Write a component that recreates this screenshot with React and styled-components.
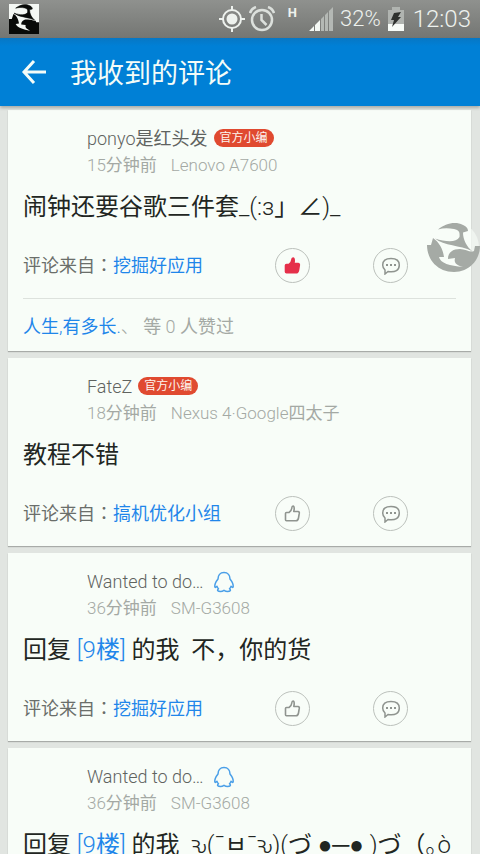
import React from "react";
import styled, { createGlobalStyle } from "styled-components";

const GlobalStyle = createGlobalStyle`
  * {
    box-sizing: border-box;
  }

  body {
    margin: 0;
    background: #e1e5e1;
    font-family: Roboto, "Noto Sans CJK SC", "DejaVu Sans", sans-serif;
    font-weight: 300;
  }

  button {
    padding: 0;
    border: none;
    background: none;
    font: inherit;
    cursor: pointer;
  }
`;

const Screen = styled.div`
  height: 100vh;
  display: flex;
  flex-direction: column;
  overflow: hidden;
`;

// 状态栏
const StatusBar = styled.div`
  height: 38px;
  flex-shrink: 0;
  padding: 0 9px;
  display: flex;
  align-items: center;
  justify-content: space-between;
  color: #eef2ee;
  background: linear-gradient(#8f918e, #747673);
`;

const StatusGroup = styled.div`
  display: flex;
  align-items: center;
  gap: 4px;
`;

const Network = styled.span`
  margin: 0 8px 12px 9px;
  font-size: 13px;
  line-height: 14px;
  font-weight: 700;
`;

const Percent = styled.span`
  margin: 0 3px;
  font-size: 22px;
  line-height: 38px;
`;

const Clock = styled.span`
  margin-left: 5px;
  font-size: 24px;
  line-height: 38px;
`;

// 标题栏
const TitleBar = styled.header`
  position: relative;
  height: 68px;
  flex-shrink: 0;
  padding: 0 20px;
  display: flex;
  align-items: center;
  gap: 22px;
  color: #f4fcf8;
  background: linear-gradient(#0777c4, #0080d6 8px);
  box-shadow: 0 2px 3px rgba(0, 0, 0, 0.25);
`;

const BackButton = styled.button`
  height: 28px;
  color: inherit;
`;

const Title = styled.h1`
  margin: 0;
  padding-top: 3px;
  font-size: 27px;
  line-height: 36px;
  font-weight: 400;
`;

// 评论列表
const List = styled.main`
  padding: 4px 9px 0 8px;
  display: flex;
  flex-direction: column;
  gap: 7px;
`;

const Card = styled.article`
  padding: 14px 15px 0;
  background: #f8fdf8;
  box-shadow: 0 1px 1px rgba(0, 0, 0, 0.25);
`;

const CardHead = styled.div`
  padding-left: 64px;
`;

const NameRow = styled.div`
  display: flex;
  align-items: center;
  gap: 6px;
  height: 28px;
`;

const Name = styled.span`
  padding-top: 2px;
  font-size: 18px;
  line-height: 26px;
  color: #5f635f;
`;

const Badge = styled.span`
  padding: 0 6px;
  border-radius: 9px;
  font-size: 12px;
  line-height: 18px;
  font-weight: 400;
  color: #fdf6f0;
  background: #e04a30;
`;

const QQBadge = styled.span`
  display: flex;
  padding: 2px 0 0 3px;
`;

const Meta = styled.div`
  display: flex;
  gap: 14px;
  font-size: 17px;
  line-height: 26px;
  color: #a4a9a4;
`;

const Content = styled.p`
  margin: 11px 0 23px;
  font-size: 24px;
  line-height: 36px;
  color: #222622;
  white-space: pre;
`;

const Link = styled.a`
  color: #1f86ea;
  text-decoration: none;
`;

const Actions = styled.div`
  display: flex;
  align-items: center;
  gap: 63px;
  padding: 0 48px 15px 0;
`;

const Source = styled.div`
  flex: 1;
  min-width: 0;
  font-size: 18px;
  line-height: 28px;
  color: #6a6e6a;
  white-space: nowrap;
`;

const RoundButton = styled.button`
  width: 35px;
  height: 35px;
  flex-shrink: 0;
  display: flex;
  align-items: center;
  justify-content: center;
  && {
    border: 1px solid #bcc1bc;
    border-radius: 50%;
  }
`;

const Likes = styled.div`
  padding-top: 3px;
  border-top: 1px solid #dde2dd;
  font-size: 18px;
  line-height: 49px;
  color: #a4a9a4;
  white-space: pre;
`;

const FloatingButton = styled.button`
  position: fixed;
  top: 222px;
  right: 0;
  width: 54px;
  height: 52px;
`;

// 汉字比拉丁字母粗一档
const Han = styled.span`
  font-weight: 400;
  line-height: 1;
`;

// 居中的全角标点
const Punct = styled.span`
  font-family: "Noto Sans CJK TC", sans-serif;
  font-weight: 400;
  line-height: 1;
`;

const Dots = styled.span`
  font-family: "Liberation Sans", sans-serif;
  line-height: 1;
`;

const Text = ({ children }) =>
  children
    .split(/([：（]+|[●─]+|[\u3040-\u30ff\u4e00-\u9fff，」∠ㅂ]+)/)
    .map((part, index) => {
      if (/^[：（]/.test(part)) return <Punct key={index}>{part}</Punct>;
      if (/^[●─]/.test(part)) return <Dots key={index}>{part}</Dots>;
      return index % 2 ? <Han key={index}>{part}</Han> : part;
    });

const FIGURE =
  "M12 7.500C18 3 25 0 33 1.500C38 3 42 5 42 9L37 10.500C37 18 41 25 46 29C34 23 18 24 9 16.500C20 20 30 21 33.500 15C34 10 33 8 28 7C22 6 17 6 12 7.500z";

const AppIcon = () => (
  <svg width="30" height="30" viewBox="0 0 54 54">
    <rect width="54" height="54" fill="#f4f8f4" />
    <path d={FIGURE} fill="#080a08" stroke="#080a08" />
    <path
      d="M0 27H5L8 18C13 20 17 27 18 35L12 36C15 43 26 46 38 48C30 44 29 42 30 38L22 37C22 30 28 27 34 28C40 28 44 31 48 30L49 33H54V54H0z"
      fill="#080a08"
    />
  </svg>
);

const LocationIcon = () => (
  <svg width="26" height="26" viewBox="0 0 26 26" fill="none" stroke="currentColor" strokeWidth="2">
    <circle cx="13" cy="13" r="9" />
    <circle cx="13" cy="13" r="5.500" fill="currentColor" stroke="none" />
    <path d="M13 0v4M13 22v4M0 13h4M22 13h4" />
  </svg>
);

const AlarmIcon = () => (
  <svg width="26" height="26" viewBox="0 0 26 26" fill="none" stroke="#dce0dc" strokeWidth="2.500">
    <circle cx="13" cy="14" r="10" />
    <path d="M12.500 8v6l5 5M1 7c1-3 3-5 6-6M25 7c-1-3-3-5-6-6" />
  </svg>
);

const SignalIcon = () => (
  <svg width="24" height="24" viewBox="0 0 24 24">
    <path d="M0 24L5 19V24zM6 18L11 13V24H6z" fill="#f4f8f4" />
    <path d="M12 12L15 9V24H12zM16 8L19 5V24H16zM20 4L24 0V24H20z" fill="#b4b8b4" />
  </svg>
);

const BatteryIcon = () => (
  <svg width="16" height="24" viewBox="0 0 16 24">
    <path d="M0 3H4V0H12V3H16V24H0z" fill="#b0b4b0" />
    <path d="M0 17H16V24H0z" fill="#f8fcf8" />
    <path d="M6 6L13 5 10 10H13L4 20 6 13H3z" fill="#2e312e" />
  </svg>
);

const BackIcon = () => (
  <svg width="28" height="28" viewBox="0 0 28 28" fill="none" stroke="currentColor" strokeWidth="3">
    <path d="M26 14H4M14 3L4 14L14 25" />
  </svg>
);

const ThumbIcon = ({ liked }) => (
  <svg
    width="18"
    height="18"
    viewBox="0 0 18 18"
    fill={liked ? "#e5304a" : "none"}
    stroke={liked ? "#e5304a" : "#8f948f"}
    strokeWidth="1.600"
    strokeLinejoin="round"
  >
    <path d="M1.500 8.500Q1.500 7.500 2.500 7.500H5Q7.500 6 7.800 3Q8 1 9 1Q10.300 1.200 10.200 4L9.800 6.500H14Q15.500 6.700 15.300 8.200L14.500 13Q14 15.700 12 15.700H2.500Q1.500 15.700 1.500 14.700z" />
  </svg>
);

const ReplyIcon = () => (
  <svg width="20" height="18" viewBox="0 0 20 18">
    <path
      d="M4 13V17L7 14.500Q18.300 16 18.300 8Q18.300 1.500 10 1.500Q1.700 1.500 1.700 8Q1.700 11 4 13z"
      fill="none"
      stroke="#8f948f"
      strokeWidth="1.500"
    />
    <path d="M5 7h2v2H5zM9 7h2v2H9zM13 7h2v2h-2z" fill="#8f948f" />
  </svg>
);

const QQIcon = () => (
  <svg width="22" height="22" viewBox="0 0 22 22" fill="none" stroke="#4a9fe8" strokeWidth="1.500">
    <path
      d="M11 1.500C7 1.500 5 4.500 5 8C3 10.500 1.500 13.500 1.800 16C2.200 16.800 3 16.300 4 15.300C4.200 16.300 4.800 17 5.500 17.700C3.500 19.500 5 20.500 7.500 20.500C9 20.500 10 20 11 19.300C12 20 13 20.500 14.500 20.500C17 20.500 18.500 19.500 16.500 17.700C17.200 17 17.800 16.300 18 15.300C19 16.300 19.800 16.800 20.200 16C20.500 13.500 19 10.500 17 8C17 4.500 15 1.500 11 1.500z"
      strokeLinejoin="round"
    />
  </svg>
);

const FloatIcon = () => (
  <svg width="54" height="52" viewBox="0 0 54 52" fill="#a5aaa5">
    <circle cx="28" cy="25" r="25" fill="#f8fdf8" fillOpacity="0.6" />
    <path d={FIGURE} />
    <path d="M1 23H5L7 16C13 20 17 27 18 35L13 35C14 41 24 44 37 45C29 43 28 40 29 36L22 37C22 30 27 27 34 27C40 27 44 31 48 29L49 24H54C54 38 43 50 28 50C12 50 1 38 1 23z" />
  </svg>
);

const comments = [
  {
    name: "ponyo是红头发",
    official: true,
    time: "15分钟前",
    device: "Lenovo A7600",
    text: "闹钟还要谷歌三件套_(:з」∠)_",
    from: "挖掘好应用",
    liked: true,
    likedBy: "人生,有多长.",
  },
  {
    name: "FateZ",
    official: true,
    time: "18分钟前",
    device: "Nexus 4·Google四太子",
    text: "教程不错",
    from: "搞机优化小组",
  },
  {
    name: "Wanted to do…",
    time: "36分钟前",
    device: "SM-G3608",
    floor: "[9楼]",
    text: "的我  不，你的货",
    from: "挖掘好应用",
  },
  {
    name: "Wanted to do…",
    time: "36分钟前",
    device: "SM-G3608",
    floor: "[9楼]",
    text: "的我  ԅ(¯ㅂ¯ԅ)(づ ●─● )づ（｡ò",
    from: "挖掘好应用",
  },
];

const Comment = ({ comment }) => {
  return (
    <Card>
      <CardHead>
        <NameRow>
          <Name>
            <Text>{comment.name}</Text>
          </Name>
          {comment.official ? (
            <Badge>官方小编</Badge>
          ) : (
            <QQBadge>
              <QQIcon />
            </QQBadge>
          )}
        </NameRow>
        <Meta>
          <span>
            <Text>{comment.time}</Text>
          </span>
          <span>
            <Text>{comment.device}</Text>
          </span>
        </Meta>
      </CardHead>
      <Content>
        {comment.floor && (
          <>
            <Text>回复 </Text>
            <Link href="#floor">
              <Text>{comment.floor}</Text>
            </Link>{" "}
          </>
        )}
        <Text>{comment.text}</Text>
      </Content>
      <Actions>
        <Source>
          <Text>评论来自：</Text>
          <Link href="#source">
            <Text>{comment.from}</Text>
          </Link>
        </Source>
        <RoundButton aria-label="赞">
          <ThumbIcon liked={comment.liked} />
        </RoundButton>
        <RoundButton aria-label="回复">
          <ReplyIcon />
        </RoundButton>
      </Actions>
      {comment.likedBy && (
        <Likes>
          <Link href="#user">
            <Text>{comment.likedBy}</Text>
          </Link>
          <Text>、 等 0 人赞过</Text>
        </Likes>
      )}
    </Card>
  );
};

const App = () => {
  return (
    <Screen>
      <GlobalStyle />
      <StatusBar>
        <AppIcon />
        <StatusGroup>
          <LocationIcon />
          <AlarmIcon />
          <Network>H</Network>
          <SignalIcon />
          <Percent>32%</Percent>
          <BatteryIcon />
          <Clock>12:03</Clock>
        </StatusGroup>
      </StatusBar>
      <TitleBar>
        <BackButton aria-label="返回">
          <BackIcon />
        </BackButton>
        <Title>我收到的评论</Title>
      </TitleBar>
      <List>
        {comments.map((comment, index) => (
          <Comment key={index} comment={comment} />
        ))}
      </List>
      <FloatingButton aria-label="悬浮球">
        <FloatIcon />
      </FloatingButton>
    </Screen>
  );
};

export default App;
